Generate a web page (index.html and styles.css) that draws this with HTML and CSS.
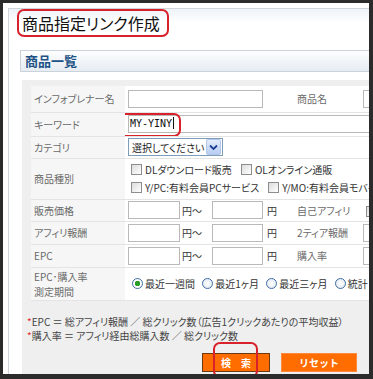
FILE: index.html
```html
<!DOCTYPE html>
<html lang="ja">
<head>
    <meta charset="UTF-8">
    <title>商品指定リンク作成</title>
    <link rel="stylesheet" href="styles.css">
</head>
<body>
    <div class="page">
        <div class="wrap">
            <h1 class="title">商品指定リンク作成</h1>
            <div class="box">
                <h2 class="box-head">商品一覧</h2>
                <div class="panel">
                    <table class="form">
                        <colgroup>
                            <col class="c1"><col class="c2"><col class="c3"><col class="c4">
                        </colgroup>
                        <tr class="r1">
                            <th>インフォブレナー名</th>
                            <td><input class="txt w-name" type="text"></td>
                            <th class="th2">商品名</th>
                            <td><input class="txt w-name" type="text"></td>
                        </tr>
                        <tr class="r2">
                            <th>キーワード</th>
                            <td colspan="3">
                                <span class="mark">
                                    <span class="field">MY-YINY<span class="caret"></span></span>
                                    <span class="ring ring-kw"></span>
                                </span>
                            </td>
                        </tr>
                        <tr class="r3">
                            <th>カテゴリ</th>
                            <td colspan="3">
                                <span class="sel">選択してください<span class="sel-btn"><svg width="9" height="7" viewBox="0 0 9 7"><path d="M1 1.5 L4.5 5 L8 1.5" fill="none" stroke="#1c3f94" stroke-width="1.8"/></svg></span></span>
                            </td>
                        </tr>
                        <tr class="r4">
                            <th>商品種別</th>
                            <td colspan="3">
                                <div class="chk-line">
                                    <label class="chk"><input type="checkbox" class="cb">DLダウンロード販売</label>
                                    <label class="chk"><input type="checkbox" class="cb">OLオンライン通販</label>
                                </div>
                                <div class="chk-line">
                                    <label class="chk"><input type="checkbox" class="cb">Y/PC:有料会員PCサービス</label>
                                    <label class="chk"><input type="checkbox" class="cb">Y/MO:有料会員モバイル</label>
                                </div>
                            </td>
                        </tr>
                        <tr class="r5">
                            <th>販売価格</th>
                            <td><input class="txt w-from" type="text"><span class="unit unit-mid">円～</span><input class="txt w-to" type="text"><span class="unit">円</span></td>
                            <th class="th2">自己アフィリ</th>
                            <td><input type="checkbox" class="cb"></td>
                        </tr>
                        <tr class="r6">
                            <th>アフィリ報酬</th>
                            <td><input class="txt w-from" type="text"><span class="unit unit-mid">円～</span><input class="txt w-to" type="text"><span class="unit">円</span></td>
                            <th class="th2">2ティア報酬</th>
                            <td><input class="txt w-from" type="text"></td>
                        </tr>
                        <tr class="r7">
                            <th>EPC</th>
                            <td><input class="txt w-from" type="text"><span class="unit unit-mid">円～</span><input class="txt w-to" type="text"><span class="unit">円</span></td>
                            <th class="th2">購入率</th>
                            <td><input class="txt w-from" type="text"></td>
                        </tr>
                        <tr class="r8">
                            <th>EPC･購入率<br>測定期間</th>
                            <td colspan="3">
                                <label class="rd-item"><input type="radio" name="term" class="rd" checked>最近一週間</label>
                                <label class="rd-item"><input type="radio" name="term" class="rd">最近1ヶ月</label>
                                <label class="rd-item"><input type="radio" name="term" class="rd">最近三ヶ月</label>
                                <label class="rd-item"><input type="radio" name="term" class="rd">統計</label>
                            </td>
                        </tr>
                    </table>

                    <p class="note"><span class="star">*</span>EPC ＝ 総アフィリ報酬 ／ 総クリック数（広告1クリックあたりの平均収益）<br><span class="star">*</span>購入率 ＝ アフィリ経由総購入数 ／ 総クリック数</p>

                    <div class="btns">
                        <span class="mark">
                            <button class="btn btn-search">検　索</button>
                            <span class="ring ring-btn"></span>
                        </span>
                        <button class="btn btn-reset">リセット</button>
                    </div>
                </div>
            </div>
        </div>
    </div>
</body>
</html>
```

FILE: styles.css
```css
body {
    margin: 0;
    background-color: #2b2b2b;
    font-family: "Noto Sans CJK JP", "Liberation Sans", sans-serif;
    font-size: 10px;
    color: #444;
}
.page {
    margin: 3px 4px 0 3px;
    height: 371px;
    box-sizing: border-box;
    padding-top: 5px;
    background: #fff;
    overflow-x: clip;
}
.wrap {
    margin-left: 5px;
    height: 366px;
    border-top: 1px solid #cfd5db;
    border-left: 1px solid #cfd5db;
    background: linear-gradient(#eef3f8, #fff 14px);
}
.title {
    width: fit-content;
    margin: 0 0 0 8px;
    padding: 0 7px 0 3px;
    border: 2px solid #d8212b;
    border-radius: 7px;
    font-size: 16px;
    line-height: 24px;
    font-weight: normal;
    color: #111;
    font-feature-settings: "palt";
}
.box {
    margin: 13px 0 0 11px;
}
.box-head {
    margin: 0;
    height: 20px;
    padding-left: 4px;
    border: 1px solid #cad2da;
    border-right: none;
    background: linear-gradient(#fdfefe, #e6ecf3);
    font-size: 13px;
    line-height: 20px;
    color: #1d5285;
}
.panel {
    margin: 8px 0 0 2px;
    padding: 6px 0 0 5px;
    height: 300px;
    background: #efefef;
}
.form {
    margin-left: 4px;
    width: 490px;
    table-layout: fixed;
    border-collapse: collapse;
    background: #fff;
}
.c1 { width: 94px; }
.c2 { width: 165px; }
.c3 { width: 70px; }
.form tr {
    border-bottom: 1px solid #e4e4e4;
}
.form th {
    padding: 0 0 0 3px;
    text-align: left;
    font-weight: normal;
    color: #6a6a6a;
    background: #f6f6f6;
    line-height: 15px;
    font-feature-settings: "palt";
}
.form th.th2 {
    padding-left: 7px;
    background: #fff;
}
.form td {
    padding: 0 0 0 3px;
    white-space: nowrap;
    overflow: hidden;
    color: #333;
    font-feature-settings: "palt";
}
.r1 { height: 26px; }
.r2 { height: 24px; }
.r3 { height: 22px; }
.r4 { height: 41px; }
.r5 { height: 22px; }
.r6 { height: 23px; }
.r7 { height: 23px; }
.r8 { height: 33px; }
.txt {
    box-sizing: border-box;
    height: 18px;
    margin: 0;
    padding: 0 2px;
    border: 1px solid #b9b9b9;
    background: #fff;
    vertical-align: middle;
    font-size: 10px;
}
.w-name { width: 135px; }
.w-from { width: 52px; }
.w-to { width: 51px; }
.unit {
    display: inline-block;
    margin: 0 0 0 4px;
    vertical-align: middle;
    font-feature-settings: normal;
}
.unit-mid {
    margin: 0 2px 0 2px;
    width: 28px;
}
.mark {
    position: relative;
    display: inline-block;
    vertical-align: middle;
}
.ring {
    position: absolute;
    border: 2px solid #d8212b;
    border-radius: 7px;
    pointer-events: none;
}
.ring-kw {
    left: -10px;
    top: -2px;
    width: 59px;
    height: 20px;
}
.ring-btn {
    left: 11px;
    top: -11px;
    width: 41px;
    height: 32px;
}
.field {
    display: block;
    box-sizing: border-box;
    width: 260px;
    height: 18px;
    padding-left: 1px;
    border: 1px solid #b9b9b9;
    font-family: "DejaVu Sans Mono", monospace;
    font-size: 10px;
    line-height: 16px;
    color: #111;
}
.caret {
    display: inline-block;
    width: 1px;
    height: 12px;
    margin-left: 1px;
    background: #111;
    vertical-align: -2px;
}
.sel {
    display: inline-flex;
    align-items: center;
    box-sizing: border-box;
    width: 95px;
    height: 18px;
    padding: 0 1px 0 3px;
    border: 1px solid #7f9db9;
    background: #fff;
    vertical-align: middle;
    color: #222;
}
.sel-btn {
    display: flex;
    align-items: center;
    justify-content: center;
    margin-left: auto;
    width: 13px;
    height: 14px;
    border: 1px solid #b3c7ea;
    border-radius: 2px;
    background: linear-gradient(#e3ecfc, #b7cdf2);
}
.chk-line {
    display: flex;
    align-items: center;
    height: 18px;
}
.chk {
    display: inline-flex;
    align-items: center;
    margin-right: 6px;
}
.cb {
    appearance: none;
    box-sizing: border-box;
    width: 11px;
    height: 11px;
    margin: 0 3px;
    border: 1px solid #8d8d8d;
    background: linear-gradient(135deg, #dcdcdc, #fff);
    vertical-align: middle;
}
.rd-item {
    display: inline-flex;
    align-items: center;
    margin-right: 1px;
}
.rd {
    appearance: none;
    box-sizing: border-box;
    width: 11px;
    height: 11px;
    margin: 0 2px 0 4px;
    border: 1px solid #3d6ea5;
    border-radius: 50%;
    background: radial-gradient(#fff, #dde5ee);
}
.rd:checked {
    background: radial-gradient(circle, #2a9c2a 0 2.5px, #fff 3px);
}
.note {
    margin: 14px 0 0 0;
    line-height: 14px;
    color: #444;
    white-space: nowrap;
    font-feature-settings: "palt";
}
.star {
    color: #e4262a;
}
.btns {
    display: flex;
    gap: 11px;
    margin-top: 10px;
    padding-left: 175px;
}
.btn {
    box-sizing: border-box;
    height: 19px;
    padding: 0;
    border: 1px solid #6b3a14;
    background: #ff6c00;
    color: #fff;
    font-family: inherit;
    font-size: 10px;
    font-weight: bold;
    line-height: 17px;
    cursor: pointer;
}
.btn-search {
    display: block;
    width: 68px;
}
.btn-reset {
    width: 76px;
    border-color: #ff8a3c;
}
```
